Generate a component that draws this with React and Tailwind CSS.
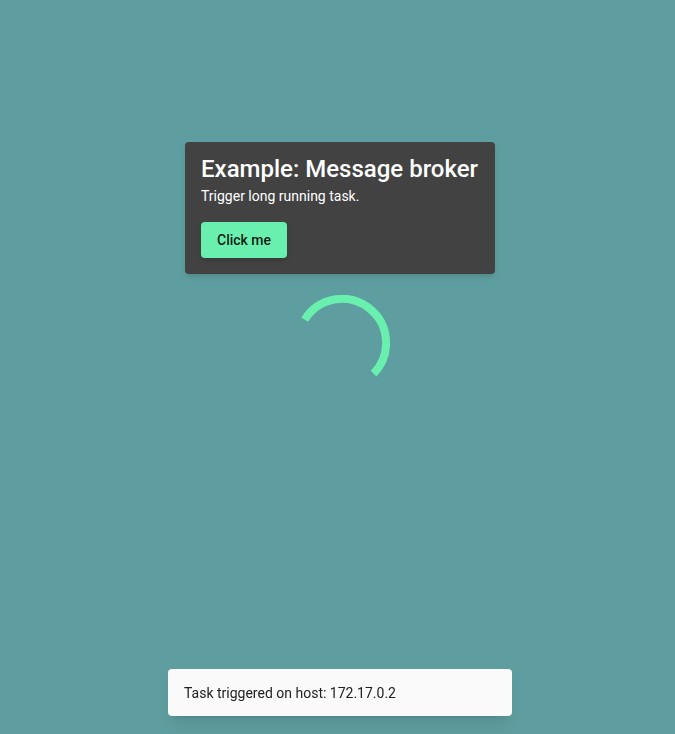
import React from 'react';

const App = () => {
  return (
    <div className="min-h-screen bg-[#5f9ea0] font-['Roboto',sans-serif] flex flex-col items-center pt-[142px] pl-[5px]">
      <div className="w-[310px] bg-[#424242] rounded shadow-md px-4 pt-[13px] pb-4 text-white">
        <h1 className="text-[24px] leading-[28px] font-medium">Example: Message broker</h1>
        <p className="mt-[3px] text-[14px] leading-5">Trigger long running task.</p>
        <button className="mt-4 h-9 px-4 rounded bg-[#69f0ae] text-[14px] font-medium text-black/90 shadow-md">
          Click me
        </button>
      </div>

      <svg className="mt-[21px] ml-[3px]" width="96" height="96" viewBox="0 0 96 96">
        <path
          d="M10.7 24.7 A44 44 0 1 1 79.6 78.6"
          fill="none"
          stroke="#69f0ae"
          strokeWidth="8"
        />
      </svg>

      <div className="fixed bottom-[18px] left-[168px] w-[344px] h-[47px] bg-[#fafafa] rounded shadow-lg px-4 flex items-center">
        <span className="text-[14px] leading-5 text-[#212121]">Task triggered on host: 172.17.0.2</span>
      </div>
    </div>
  );
};

export default App;
